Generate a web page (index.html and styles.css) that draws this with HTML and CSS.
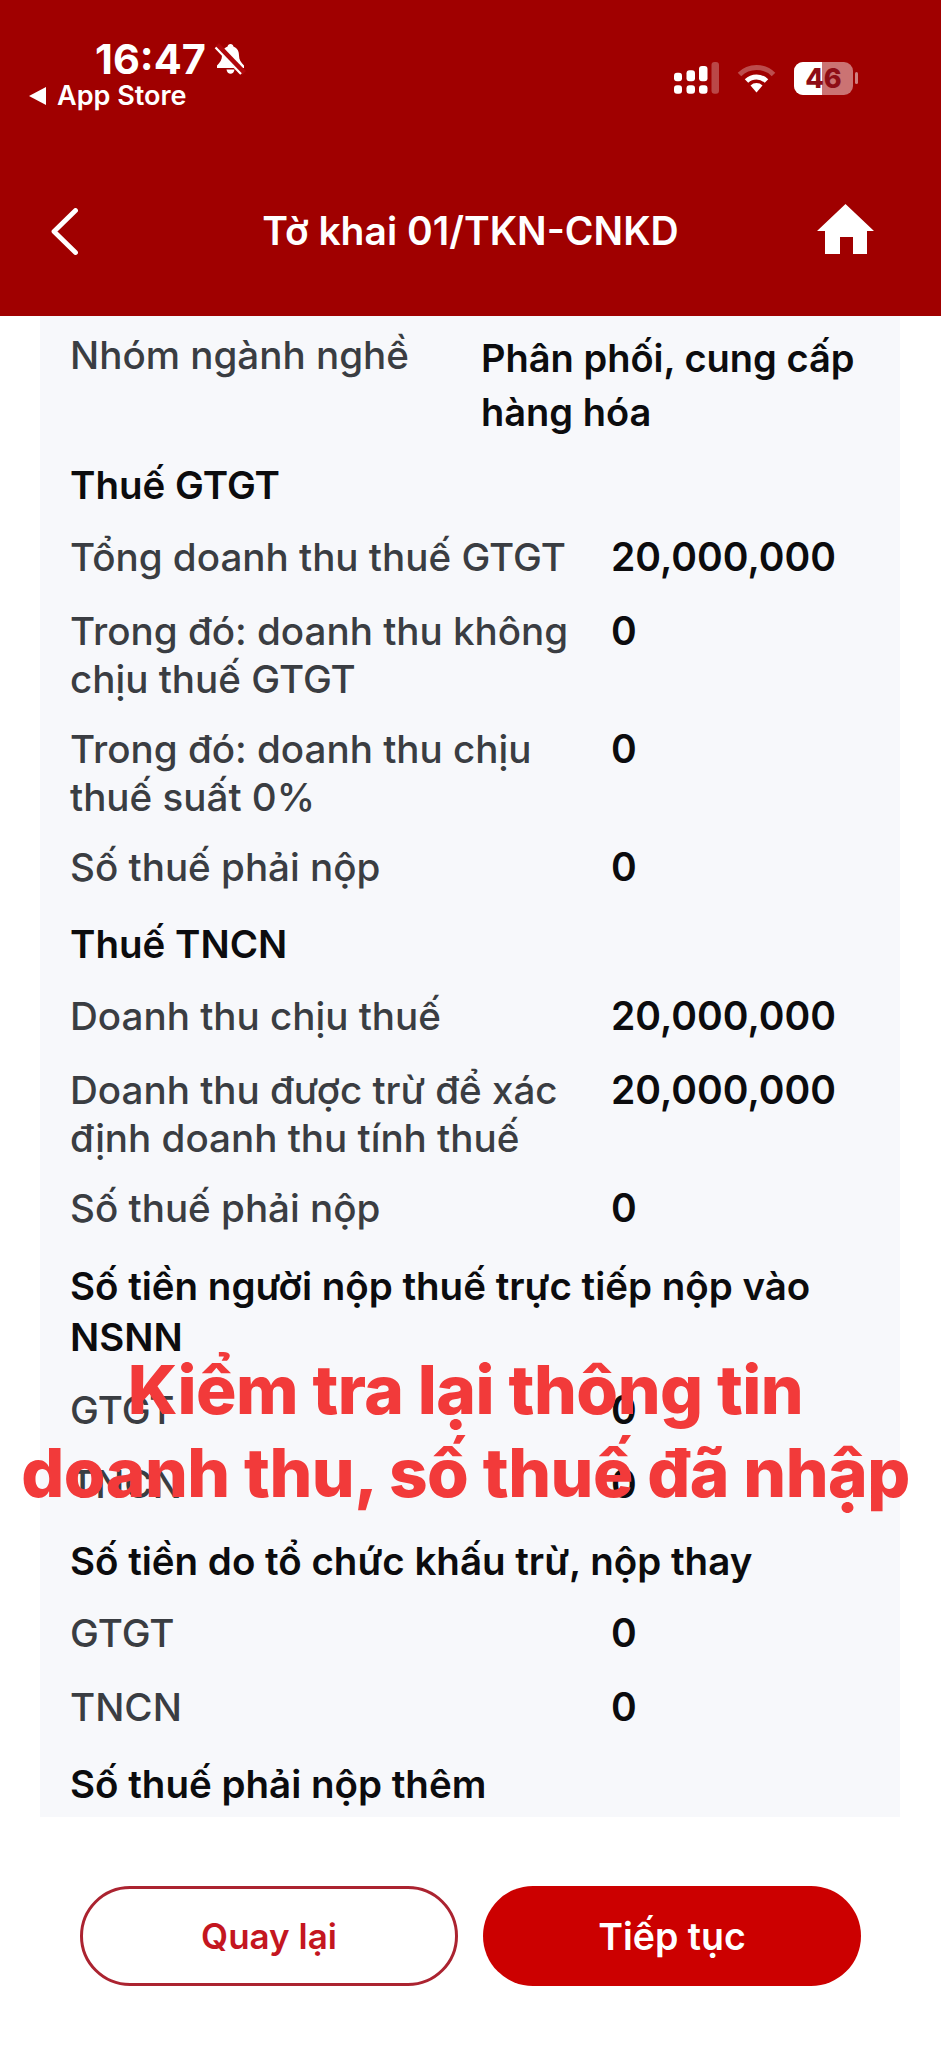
FILE: index.html
```html
<!DOCTYPE html>
<html lang="vi">
<head>
<meta charset="utf-8">
<title>Tờ khai 01/TKN-CNKD</title>
<link rel="stylesheet" href="styles.css">
</head>
<body>
<div class="phone">
  <header class="topbar">
    <div class="status">
      <div class="status-left">
        <div class="time-line">
          <span class="time">16:47</span>
          <svg class="bell" viewBox="0 0 33 32"><path d="M16.500 1c-1.700 0-2.700 1.100-2.900 2.500C9.500 5 8 8.500 8 12.500c0 4.500-2 7-5 10V25h27v-2.500c-3-3-5-5.500-5-10 0-4-1.500-7.500-5.600-9C19.200 2.100 18.200 1 16.500 1z" fill="#fff"/><path d="M12.500 26.500h8c-.4 2.700-2 4.300-4 4.300s-3.600-1.600-4-4.300z" fill="#fff"/><path d="M3 2 30 30" stroke="#b0080c" stroke-width="5.500"/><path d="M1.500 4.500 27 31" stroke="#fff" stroke-width="2.200"/></svg>
        </div>
        <div class="back-app"><span class="tri"></span><span>App Store</span></div>
      </div>
      <div class="status-right">
        <svg class="signal" viewBox="0 0 45 32"><g fill="#fff"><rect x="0" y="10.700" width="8" height="8.600" rx="3"/><rect x="12.500" y="8.300" width="8.500" height="11" rx="3"/><rect x="25" y="4" width="8.500" height="15.300" rx="3"/><rect x="0" y="23.300" width="8" height="8.400" rx="3"/><rect x="12.500" y="23.300" width="8.500" height="8.400" rx="3"/><rect x="25" y="23.300" width="8.500" height="8.400" rx="3"/></g><rect x="37.500" y="0" width="7.500" height="31.700" rx="3" fill="#fff" opacity=".28"/></svg>
        <svg class="wifi" viewBox="0 0 39 29"><path d="M2.500 10.500a24 24 0 0 1 34 0" fill="none" stroke="#fff" stroke-opacity=".3" stroke-width="5"/><path d="M9.500 17a14.500 14.500 0 0 1 20 0" fill="none" stroke="#fff" stroke-width="5"/><path d="M19.500 28.500l-6-7a8.500 8.500 0 0 1 12 0z" fill="#fff"/></svg>
        <div class="battery"><div class="battery-body"><span class="battery-fill"></span><span class="battery-num">46</span></div><span class="battery-cap"></span></div>
      </div>
    </div>
    <nav class="nav">
      <svg class="chevron" viewBox="0 0 27 47"><path d="M24.500 2.500 3 23.500l21.500 21" fill="none" stroke="#fff" stroke-width="4.800" stroke-linecap="round" stroke-linejoin="round"/></svg>
      <h1 class="title">Tờ khai 01/TKN-CNKD</h1>
      <svg class="home" viewBox="0 0 57 50"><path d="M28.500 0 0 27h8v23h15V33h13v17h14V27h7z" fill="#fff"/></svg>
    </nav>
  </header>

  <main class="content">
    <section class="panel">
      <div class="row row-first"><div class="label first">Nhóm ngành nghề</div><div class="value text">Phân phối, cung cấp hàng hóa</div></div>
      <div class="row head">Thuế GTGT</div>
      <div class="row"><div class="label">Tổng doanh thu thuế GTGT</div><div class="value">20,000,000</div></div>
      <div class="row tight"><div class="label">Trong đó: doanh thu không chịu thuế GTGT</div><div class="value">0</div></div>
      <div class="row tight"><div class="label">Trong đó: doanh thu chịu thuế suất 0%</div><div class="value">0</div></div>
      <div class="row"><div class="label">Số thuế phải nộp</div><div class="value">0</div></div>
      <div class="row head">Thuế TNCN</div>
      <div class="row"><div class="label">Doanh thu chịu thuế</div><div class="value">20,000,000</div></div>
      <div class="row tight"><div class="label">Doanh thu được trừ để xác định doanh thu tính thuế</div><div class="value">20,000,000</div></div>
      <div class="row"><div class="label">Số thuế phải nộp</div><div class="value">0</div></div>
      <div class="row head head-wrap">Số tiền người nộp thuế trực tiếp nộp vào NSNN</div>
      <div class="row"><div class="label">GTGT</div><div class="value">0</div></div>
      <div class="row"><div class="label">TNCN</div><div class="value">0</div></div>
      <div class="row head">Số tiền do tổ chức khấu trừ, nộp thay</div>
      <div class="row"><div class="label">GTGT</div><div class="value">0</div></div>
      <div class="row"><div class="label">TNCN</div><div class="value">0</div></div>
      <div class="row head">Số thuế phải nộp thêm</div>
    </section>
    <div class="overlay">Kiểm tra lại thông tin<br>doanh thu, số thuế đã nhập</div>
  </main>

  <footer class="actions">
    <button class="btn btn-outline">Quay lại</button>
    <button class="btn btn-solid">Tiếp tục</button>
  </footer>
</div>
</body>
</html>
```
FILE: styles.css
```css
* { box-sizing: border-box; }
html, body { margin: 0; padding: 0; background: #fff; }
body { font-family: Inter, "Liberation Sans", sans-serif; }
.phone { width: 941px; height: 2048px; overflow: hidden; display: flex; flex-direction: column; background: #fff; }

.topbar { height: 316px; background: #a00000; color: #fff; flex: none; display: flex; flex-direction: column; }
.status { height: 120px; padding: 39px 83px 0 29px; display: flex; justify-content: space-between; }
.status-left { display: flex; flex-direction: column; }
.time-line { display: flex; align-items: center; gap: 8px; padding-left: 66px; height: 40px; }
.time { font-size: 41.500px; font-weight: 700; line-height: 40px; }
.bell { width: 33px; height: 32px; }
.back-app { display: flex; align-items: center; gap: 11px; font-size: 27px; font-weight: 600; line-height: 30px; margin-top: 2px; }
.tri { width: 0; height: 0; border-style: solid; border-width: 9px 17px 9px 0; border-color: transparent #fff transparent transparent; }
.status-right { display: flex; align-items: center; gap: 18px; height: 34px; margin-top: 22px; }
.signal { width: 45px; height: 32px; }
.wifi { width: 39px; height: 29px; }
.battery { display: flex; align-items: center; gap: 2px; }
.battery-body { position: relative; width: 59px; height: 33px; border-radius: 9px; background: rgba(255,255,255,.45); overflow: hidden; display: flex; align-items: center; justify-content: center; }
.battery-fill { position: absolute; left: 0; top: 0; bottom: 0; width: 28px; background: #fff; }
.battery-num { position: relative; color: #8e0d16; font-size: 27px; font-weight: 800; }
.battery-cap { width: 3px; height: 12px; border-radius: 2px; background: rgba(255,255,255,.5); }

.nav { height: 120px; padding: 0 51px; display: grid; grid-template-columns: 1fr auto 1fr; align-items: center; margin-top: 51px; }
.chevron { width: 27px; height: 47px; justify-self: start; }
.title { margin: 0; font-size: 39px; font-weight: 600; line-height: 46px; }
.home { width: 57px; height: 50px; margin: 0 16px 4px 0; justify-self: end; }

.content { position: relative; flex: none; height: 1501px; }
.panel { margin: 0 41px 0 40px; height: 1501px; padding: 15px 31px 0 30px; background: #f7f8fb; display: flex; flex-direction: column; overflow: hidden; }
.row { display: flex; margin-bottom: 26px; font-size: 38.600px; line-height: 48px; font-weight: 500; }
.row.tight { margin-bottom: 22px; }
.row-first { margin-bottom: 19px; }
.label { width: 541px; flex: none; color: #3a3d42; padding-right: 20px; }
.label.first { width: 411px; }
.value { color: #0c0c0e; font-weight: 600; font-size: 39px; }
.value.text { font-size: 38px; line-height: 54px; }
.head { display: block; color: #0c0c0e; font-weight: 600; font-size: 38.500px; margin-top: 3px; margin-bottom: 24px; }
.head.head-wrap { line-height: 51px; margin-bottom: 23px; }

.overlay { position: absolute; left: 0; right: 0; top: 1032px; padding-right: 10px; text-align: center; color: #f23a3a; font-size: 67.500px; line-height: 83px; font-weight: 800; letter-spacing: -.5px; white-space: nowrap; }

.actions { flex: none; height: 231px; padding: 69px 80px 0; display: flex; gap: 25px; align-items: flex-start; }
.btn { width: 378px; height: 100px; border-radius: 50px; font-family: inherit; font-weight: 600; padding: 0; cursor: pointer; }
.btn-outline { background: #fff; color: #c4161f; border: 3px solid #ab2330; font-size: 35px; }
.btn-solid { background: #cc0000; color: #fff; border: none; font-size: 37.500px; }
```
